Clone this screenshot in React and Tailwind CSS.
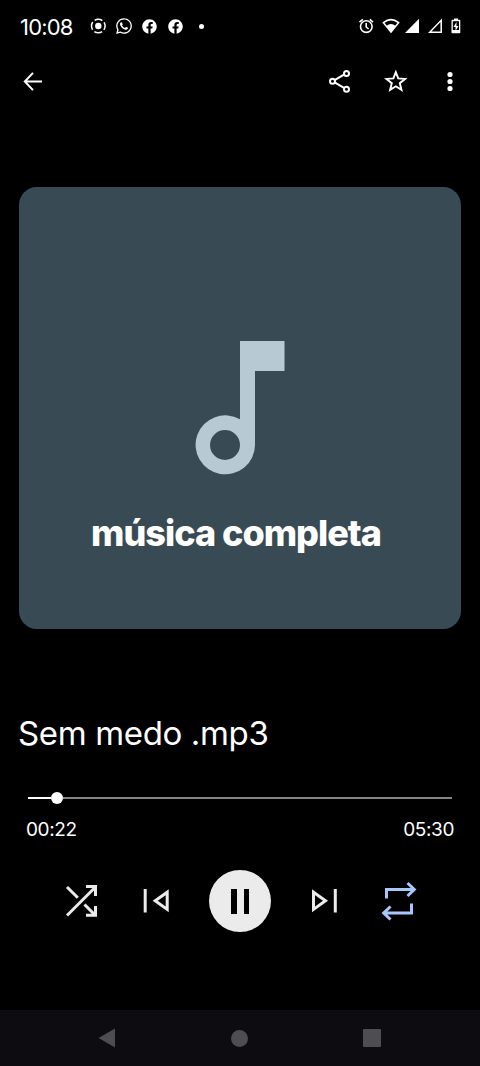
import { FaWhatsapp, FaFacebook } from 'react-icons/fa';

function StatusBar() {
  return (
    <header className="flex h-[52px] items-center justify-between pl-[20px] pr-[19px]">
      <div className="flex items-center">
        <span className="w-[70px] whitespace-nowrap pt-[1px] text-[22px] leading-[26px] tracking-[-0.8px]">10:08</span>
        <svg className="size-4" viewBox="0 0 16 16" fill="none" stroke="currentColor" strokeWidth="1.5">
          <circle cx="8.3" cy="8" r="3.2" fill="currentColor" stroke="none" />
          <circle cx="8.3" cy="8" r="6.8" strokeDasharray="8.2 2.48" strokeDashoffset="4.1" />
        </svg>
        <FaWhatsapp className="ml-[9px] size-[18px]" />
        <FaFacebook className="ml-[9px] size-[15px]" />
        <FaFacebook className="ml-[11px] size-[15px]" />
        <span className="ml-[16px] size-[5px] rounded-full bg-white" />
      </div>
      <div className="flex items-center">
        <svg className="size-4" viewBox="0 0 16 16" fill="none" stroke="currentColor" strokeWidth="1.6">
          <circle cx="8.3" cy="8.6" r="5.8" />
          <path d="M8.2 5v4l2.4 2M1.5 4.2 4.8 1.4M15 4.2 11.8 1.4" />
        </svg>
        <svg className="ml-[8px] h-4 w-[18px]" viewBox="0 0 18 16">
          <path d="M1.4 4.7Q9-1.4 16.6 4.7L9 14Z" fill="none" stroke="currentColor" strokeWidth="1.6" />
          <path d="M4.2 8Q9 4.2 13.8 8L9 14.6Z" fill="currentColor" />
        </svg>
        <svg className="ml-[5px] h-4 w-[14px]" viewBox="0 0 14 16" fill="currentColor">
          <path d="M14 .7V15H0Z" />
        </svg>
        <svg className="ml-[9px] h-4 w-[14px]" viewBox="0 0 14 16" fill="none" stroke="currentColor" strokeWidth="1.5">
          <path d="M13.2 2.3V14.2H1.7Z" />
        </svg>
        <svg className="ml-[9px] h-4 w-[10px]" viewBox="0 0 10 16">
          <path d="M3 .4h4v1.4h1.5q.8 0 .8.8V14.4q0 .8-.8.8H1.3q-.8 0-.8-.8V2.6q0-.8.8-.8H3Z" fill="currentColor" />
          <path d="M1.8 3.2H8v8.8H1.8Z" fill="black" />
          <path d="M5.5 4 2.5 8.9h2V13l3-5h-2Z" fill="currentColor" />
        </svg>
      </div>
    </header>
  );
}

function AppBar() {
  return (
    <div className="flex h-[60px] items-center justify-between pl-[20px] pr-[23px]">
      <button>
        <svg className="size-6" viewBox="0 0 24 24" fill="none" stroke="currentColor" strokeWidth="2">
          <path d="M22 11.5H5M13 2.9 4.8 11.5 13 20.1" />
        </svg>
      </button>
      <div className="flex items-center">
        <button>
          <svg className="h-6 w-[24px]" viewBox="0 0 24 24" fill="none" stroke="currentColor" strokeWidth="2">
            <path d="m7 9.9 9-5.2M7 12.6l9 5.2" />
            <circle cx="4.5" cy="11.3" r="2.5" />
            <circle cx="18.5" cy="3.5" r="2.5" />
            <circle cx="18.5" cy="19.3" r="2.5" />
          </svg>
        </button>
        <button className="ml-[32px]">
          <svg className="size-6" viewBox="0 0 24 24" fill="none" stroke="currentColor" strokeWidth="1.9">
            <path d="m11.8 2.2 2.4 6.2 6.9.5-5.3 4.3 1.7 6.7-5.7-3.6-5.7 3.6 1.7-6.7-5.3-4.3 6.9-.5Z" />
          </svg>
        </button>
        <button className="ml-[37px]">
          <svg className="h-6 w-[12px]" viewBox="0 0 12 24" fill="currentColor">
            <circle cx="5" cy="4.5" r="2.6" />
            <circle cx="5" cy="11.5" r="2.6" />
            <circle cx="5" cy="18.5" r="2.6" />
          </svg>
        </button>
      </div>
    </div>
  );
}

function Artwork() {
  return (
    <div className="mx-[19px] mt-[75px] flex h-[442px] flex-col items-center rounded-[18px] bg-[#384b55] pt-[154px]">
      <svg className="h-[134px] w-[90px]" viewBox="0 0 90 134">
        <path
          d="M45 0h44.5v30H60v74a29.7 29.5 0 1 1-15-25.8Z M30 89a15 15 0 1 0 0 30a15 15 0 1 0 0-30Z"
          fill="#b7cad4"
          fillRule="evenodd"
        />
      </svg>
      <p className="mr-[8px] mt-[34px] whitespace-nowrap text-[36px] font-extrabold leading-[48px] tracking-[-1px]">
        música completa
      </p>
    </div>
  );
}

function Progress() {
  return (
    <div className="mt-[37px] px-[28px]">
      <div className="flex h-3 items-center">
        <div className="h-[2px] w-[22.5px] bg-white" />
        <div className="size-[12px] rounded-full bg-white" />
        <div className="h-[2px] flex-1 bg-[#858585]" />
      </div>
      <div className="-mx-[2px] mt-[14px] flex justify-between text-[19px] leading-6 tracking-[-0.4px]">
        <span>00:22</span>
        <span>05:30</span>
      </div>
    </div>
  );
}

function Controls() {
  return (
    <div className="mt-[28px] flex h-[62px] items-center justify-between pl-[64px] pr-[62px] text-[#ebebeb]">
      <button>
        <svg className="h-9 w-[36px]" viewBox="0 0 36 36" fill="none" stroke="currentColor" strokeWidth="3">
          <path d="M3 32.5 31 4.5M22 3.6h9.5V13M3 4l10.8 10.8M20.5 21.5 31 32M22 32.3h9.5V23" />
        </svg>
      </button>
      <button>
        <svg className="h-9 w-[28px]" viewBox="0 0 28 36" fill="none" stroke="currentColor" strokeWidth="3">
          <path d="M4.2 6v23.5M26.2 9.2v17.2L14.2 17.8Z" />
        </svg>
      </button>
      <button className="flex size-[62px] items-center justify-center gap-[7px] rounded-full bg-[#ebebeb]">
        <span className="h-[25px] w-[5.5px] bg-black" />
        <span className="h-[25px] w-[5.5px] bg-black" />
      </button>
      <button>
        <svg className="h-9 w-[28px]" viewBox="0 0 28 36" fill="none" stroke="currentColor" strokeWidth="3">
          <path d="M23.3 6v23.5M1.5 9.2v17.2L13.5 17.8Z" />
        </svg>
      </button>
      <button className="text-[#a8c7fa]">
        <svg className="h-[40px] w-[38px]" viewBox="0 0 38 40" fill="none" stroke="currentColor" strokeWidth="3">
          <path d="M6.5 17.5V8.5H33M27.5 2l6.8 6.5-6.8 6.5M31.5 22.5v9.5H4.5M10.5 25.5 3.7 32l6.8 6.5" />
        </svg>
      </button>
    </div>
  );
}

function NavBar() {
  return (
    <nav className="mt-auto flex h-[56px] items-center justify-between bg-[#0d0c10] pl-[98px] pr-[99px] text-[#4e4d52]">
      <svg className="h-5 w-[18px]" viewBox="0 0 18 20" fill="currentColor">
        <path d="M.5 10 17 .5v19Z" />
      </svg>
      <span className="size-[17px] rounded-full bg-current" />
      <span className="size-[18px] rounded-[1px] bg-current" />
    </nav>
  );
}

export default function App() {
  return (
    <div className="flex h-[1066px] w-[480px] flex-col overflow-hidden bg-black font-['Inter',sans-serif] text-white">
      <StatusBar />
      <AppBar />
      <Artwork />
      <h1 className="ml-[18px] mt-[82px] whitespace-nowrap text-[33px] font-normal leading-[44px] tracking-[-0.35px]">
        Sem medo .mp3
      </h1>
      <Progress />
      <Controls />
      <NavBar />
    </div>
  );
}
